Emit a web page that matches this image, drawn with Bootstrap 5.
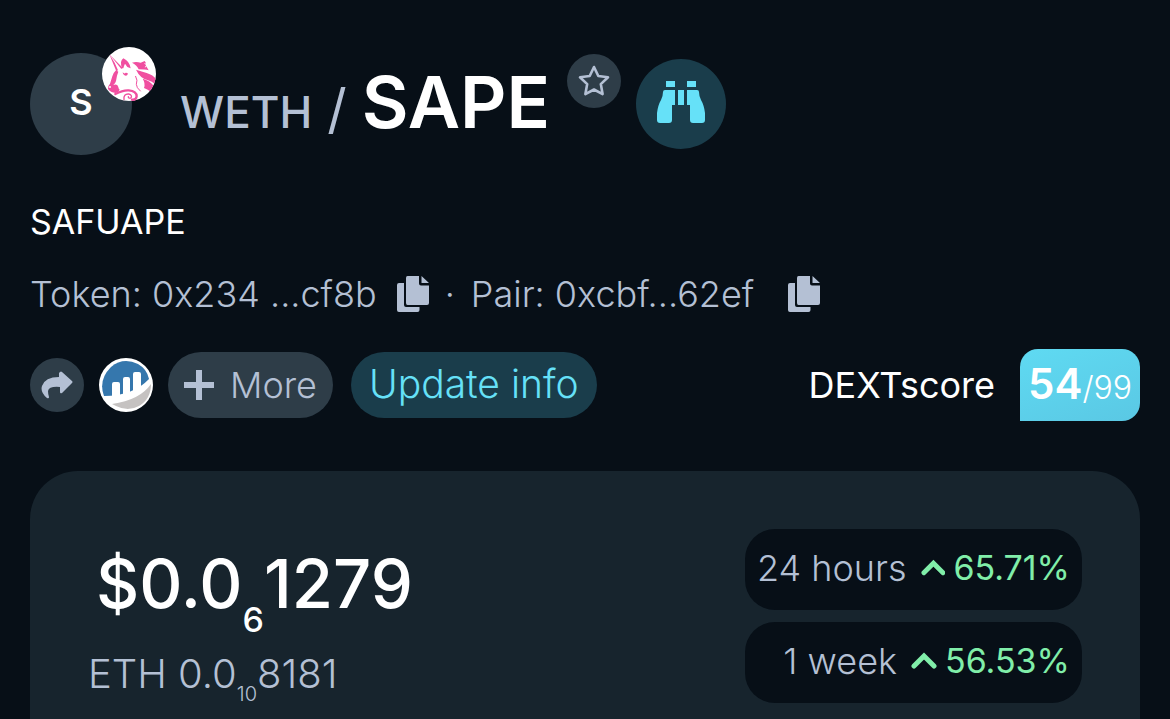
<!DOCTYPE html>
<html lang="en">
<head>
<meta charset="utf-8">
<meta name="viewport" content="width=device-width, initial-scale=1">
<title>WETH / SAPE</title>
<link href="https://cdn.jsdelivr.net/npm/bootstrap@5.3.0/dist/css/bootstrap.min.css" rel="stylesheet">
<style>
  :root { --ink: #070f17; --slate: #2e3d48; --teal: #1a3d4b; --muted: #b4c0d4; --cyan: #66e1f8; --green: #80eea9; }
  body { background: var(--ink); color: #fff; font-family: Inter, "Liberation Sans", sans-serif; font-size: 36px; line-height: 54px; }
  .page { padding: 47px 30px 0; }
  .txt-muted { color: var(--muted); }
  .round { width: 54px; height: 54px; border-radius: 50%; padding: 0; border: 0; flex: none; display: flex; align-items: center; justify-content: center; }
  .bg-slate { background: var(--slate); color: var(--muted); }
  .bg-teal { background: var(--teal); color: var(--cyan); }
  .avatar { width: 102px; height: 102px; color: #fff; font-weight: 600; margin-top: 6px; padding-bottom: 4px; }
  .avatar-wrap { width: 126px; }
  .exchange { position: absolute; top: 0; right: 0; }
  .watch { width: 90px; height: 90px; margin: 12px 0 0 15px; padding-bottom: 4px; }
  .star { margin: 7px 0 0 17px; }
  .pair-title { margin: 0 0 0 24px; padding-top: 2px; font-size: 72px; line-height: 106px; font-weight: 600; }
  .pair-title .base { font-size: 44px; font-weight: 500; }
  .pair-title .slash { font-size: 54px; font-weight: 400; margin: 0 15px; }
  .token-name { margin-top: 30px; font-size: 34px; }
  .addresses { margin-top: 18px; font-weight: 300; }
  .copy { background: none; border: 0; padding: 0; color: var(--muted); display: flex; }
  .copy-token { margin-left: 20px; }
  .copy-pair { margin-left: 34px; }
  .pill { height: 66px; border: 0; border-radius: 33px; padding: 0 16px; display: flex; align-items: center; font-weight: 300; }
  .update { font-size: 39px; margin-left: 18px; padding: 0 18px 2px; }
  .actions { margin-top: 28px; }
  .listing, .more { margin-left: 15px; }
  .score { background: linear-gradient(160deg, #5fdaf2, #5ac8e4); border-radius: 18px 18px 18px 0; width: 120px; height: 72px; font-size: 32px; line-height: 70px; margin-left: 25px; font-weight: 300; }
  .score b { font-size: 42px; font-weight: 600; }
  .price-panel { background: #17242d; border-radius: 48px 48px 0 0; margin-top: 50px; padding: 58px 58px 16px; }
  .price { font-size: 67px; line-height: 90px; font-weight: 500; padding: 10px 0 0 8px; }
  .price-eth { font-size: 40px; line-height: 60px; font-weight: 300; margin-top: 15px; }
  .zeros { position: relative; display: inline-block; line-height: 1; vertical-align: baseline; top: 24px; font-size: 34px; }
  .price-eth .zeros { font-size: 20px; top: 13px; }
  .changes { gap: 12px; }
  .change { background: var(--ink); border-radius: 30px; width: 337px; height: 81px; padding: 0 12px 4px; font-weight: 300; }
  .change svg { color: var(--green); margin: 0 8px 0 14px; }
  .up { color: var(--green); font-weight: 400; font-size: 34px; }
</style>
</head>
<body>
<svg class="d-none" xmlns="http://www.w3.org/2000/svg">
  <symbol id="copy" viewBox="0 0 32 36">
    <path fill="currentColor" d="M10.500 0H22v7.500q0 2 2 2h8V27q0 2-2 2H10.500q-1.500 0-1.500-2V2q0-2 1.500-2zM24.500 0 32 7h-7.500zM2 7h5v22q0 2 2 2h13.500v3q0 2-2 2H2q-2 0-2-2V9q0-2 2-2z"/>
  </symbol>
  <symbol id="up" viewBox="0 0 26 18"><path d="M3 14 13 4l10 10" fill="none" stroke="currentColor" stroke-width="5" stroke-linecap="round"/></symbol>
</svg>
<main class="page container-fluid min-vh-100 d-flex flex-column">
  <header class="d-flex align-items-start">
    <div class="avatar-wrap position-relative flex-shrink-0">
      <div class="round avatar bg-slate text-white">S</div>
      <svg class="exchange" width="54" height="54" viewBox="0 0 162 162" role="img" aria-label="Uniswap">
        <defs><clipPath id="disc"><circle cx="81" cy="81" r="81"/></clipPath></defs>
        <circle cx="81" cy="81" r="81" fill="#fff"/>
        <g clip-path="url(#disc)" fill="#f04fa0">
          <path d="M22 22 62 62l-4 4zM22 22l16 25 10 23-5 3z"/>
          <path d="M60 64Q52 42 64 34q18 8 22 30l-10-4-7-10q-4 8-5 14z"/>
          <path d="M42 70l7 4-4 12-3 16q-2 8-8 12 12-4 15 6 0 5 4 8-2 8-12 10-16-1-23-12-2-8 6-16Q28 98 31 88q4-12 11-18z"/>
          <path d="M62 76q6 6 9 1l6 1q1 8-6 8-8-1-9-10z"/>
          <path d="M90 47q12-4 26 0l12-5q6 6 4 14l8 14q-10-3-30-3-6-14-20-20z"/>
          <path d="M102 68q18 6 32 10 20 6 28 18v18q-12-12-26-15-22-6-34-31z"/>
          <path d="M122 95q22 6 33 22l-8 18q-9-8-21-12 5-14-4-28z"/>
        </g>
        <g fill="none" stroke="#f04fa0" stroke-linecap="round">
          <path d="M40 141q22-12 40-11 24 2 24 18-2 12-14 10" stroke-width="7"/>
          <path d="M66 158q-2-18 14-17 12 3 7 12-9 2-8-4" stroke-width="4"/>
          <path d="M101 88q7 12 2 24 0 10 12 20" stroke-width="3"/>
        </g>
        <circle cx="24" cy="120" r="3" fill="#fff"/>
        <path d="M128 48l12 14M138 47l-8 14" fill="none" stroke="#fff" stroke-width="3"/>
      </svg>
    </div>
    <h1 class="pair-title text-nowrap"><span class="base txt-muted">WETH</span><span class="slash txt-muted">/</span>SAPE</h1>
    <button type="button" class="round star bg-slate" aria-label="Add to favourites">
      <svg width="34" height="34" viewBox="0 0 34 34"><path d="M17 3l4.300 9 9.700 1.300-7.200 6.800 1.800 10L17 25.500 8.400 30.100l1.800-10L3 13.300 12.700 12z" fill="none" stroke="currentColor" stroke-width="2.600" stroke-linejoin="round"/></svg>
    </button>
    <button type="button" class="round watch bg-teal" aria-label="Watch">
      <svg width="48" height="44" viewBox="0 0 48 44" fill="currentColor"><path d="M9 1h9v6H9zM30 1h9v6h-9zM21 10h6v15h-6zM8 10h10v15h-3v15q0 3-3 3H3q-3 0-3-3v-7q1-8 4-13 2-4 2-8 0-2 2-2zM40 10H30v15h3v15q0 3 3 3h9q3 0 3-3v-7q-1-8-4-13-2-4-2-8 0-2-2-2z"/></svg>
    </button>
  </header>

  <div class="token-name">SAFUAPE</div>

  <div class="addresses d-flex align-items-center txt-muted text-nowrap">
    <span>Token: 0x234 ...cf8b</span>
    <button type="button" class="copy copy-token" aria-label="Copy token address"><svg width="32" height="36"><use href="#copy"/></svg></button>
    <span class="mx-3">·</span>
    <span>Pair: 0xcbf...62ef</span>
    <button type="button" class="copy copy-pair" aria-label="Copy pair address"><svg width="32" height="36"><use href="#copy"/></svg></button>
  </div>

  <div class="actions d-flex align-items-center text-nowrap">
    <button type="button" class="round bg-slate" aria-label="Share">
      <svg width="32" height="28" viewBox="0 0 32 28"><path fill="currentColor" d="M19 1q1-1 2 0l10 9q1 1 0 2l-10 10q-2 1-2-1v-5Q8 15 7 20q0 3 1 6 0 2-2 1Q-1 21 1 15 4 6 18 6V2z"/></svg>
    </button>
    <a href="#" class="round listing" aria-label="Etherscan">
      <svg width="54" height="54" viewBox="0 0 54 54">
        <circle cx="27" cy="27" r="27" fill="#fff"/>
        <path d="M5 38Q-1 22 12 9 24-1 39 6q9 5 11 15Q34 38 5 38z" fill="#3577ad"/>
        <path d="M52 26q0 15-12 22-11 6-23 0l-4-2q28-4 39-20z" fill="#c5c2c1"/>
        <path d="M13 41V26q0-2 2-2h4q2 0 2 2v14h3V21q0-2 2-2h3q2 0 2 2v16h3V16q0-2 2-2h4q2 0 2 2v14l8-8-4 10Q30 46 6 42l-2-3q5 0 9-1z" fill="#fff"/>
      </svg>
    </a>
    <button type="button" class="pill more bg-slate">
      <svg width="30" height="30" viewBox="0 0 30 30" class="me-3"><path d="M15 0v30M0 15h30" stroke="currentColor" stroke-width="6"/></svg>More
    </button>
    <button type="button" class="pill update bg-teal">Update info</button>
    <div class="ms-auto">DEXTscore</div>
    <div class="score text-center"><b>54</b>/99</div>
  </div>

  <section class="price-panel flex-grow-1 d-flex justify-content-between align-items-start text-nowrap">
    <div>
      <div class="price">$0.0<span class="zeros">6</span>1279</div>
      <div class="price-eth txt-muted">ETH 0.0<span class="zeros">10</span>8181</div>
    </div>
    <div class="changes d-grid">
      <div class="change d-flex align-items-center justify-content-end"><span class="txt-muted">24 hours</span><svg width="26" height="18"><use href="#up"/></svg><span class="up">65.71%</span></div>
      <div class="change d-flex align-items-center justify-content-end"><span class="txt-muted">1 week</span><svg width="26" height="18"><use href="#up"/></svg><span class="up">56.53%</span></div>
    </div>
  </section>
</main>
<script src="https://cdn.jsdelivr.net/npm/bootstrap@5.3.0/dist/js/bootstrap.bundle.min.js"></script>
</body>
</html>
